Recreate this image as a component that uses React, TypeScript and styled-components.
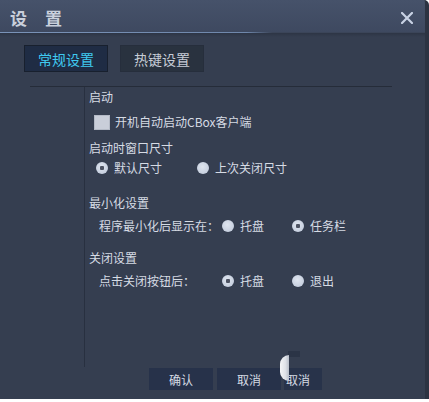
import React from "react";
import styled, { createGlobalStyle } from "styled-components";

const Global = createGlobalStyle`
  html, body { margin: 0; padding: 0; background: #ffffff; }
  body { font-family: "Noto Sans CJK SC", "Noto Sans", sans-serif; }
`;

const Window = styled.div`
  position: relative;
  width: 429px;
  height: 399px;
  box-sizing: border-box;
  background: #353e50;
  border-right: 4px solid #2c3342;
  border-top-right-radius: 5px;
  display: flex;
  flex-direction: column;
  overflow: hidden;
  color: #d6dbe4;
  font-size: 12px;
`;

const TitleBar = styled.div`
  height: 32px;
  display: flex;
  align-items: center;
  justify-content: space-between;
  padding: 0 12px 0 10px;
  background: linear-gradient(180deg, #46526a 0%, #3e4960 100%);
  flex-shrink: 0;
`;

const Title = styled.div`
  font-size: 17px;
  font-weight: 700;
  color: #c9d0dc;
  letter-spacing: 18px;
  margin-top: 3px;
`;

const Close = styled.div`
  width: 12px;
  height: 12px;
  display: flex;
  margin-top: 3px;
`;

const TitleGlow = styled.div`
  height: 1px;
  background: linear-gradient(90deg, #7a93b8 0%, #6f87ab 58%, #3b4559 64%);
  flex-shrink: 0;
`;

const ShadowBand = styled.div`
  height: 4px;
  background: linear-gradient(180deg, #2d3545 0%, #353e50 100%);
  flex-shrink: 0;
`;

const TabRow = styled.div`
  display: flex;
  gap: 12px;
  padding: 8px 0 14px 24px;
`;

const Tab = styled.div<{ $active?: boolean }>`
  width: 84px;
  height: 27px;
  box-sizing: border-box;
  display: flex;
  align-items: center;
  justify-content: center;
  font-size: 14px;
  color: ${(p) => (p.$active ? "#3fcaf0" : "#c6ccd6")};
  background: ${(p) => (p.$active ? "#1f2c44" : "#29323f")};
  border: 1px solid ${(p) => (p.$active ? "#18202e" : "#262e3c")};
`;

const Divider = styled.div`
  height: 1px;
  margin: 0 33px 0 30px;
  background: #252c39;
  flex-shrink: 0;
`;

const Body = styled.div`
  display: flex;
  height: 280px;
  flex-shrink: 0;
`;

const Gutter = styled.div`
  width: 84px;
  border-right: 1px solid #283040;
  flex-shrink: 0;
`;

const Content = styled.div`
  display: flex;
  flex-direction: column;
  padding-left: 4px;
`;

const Line = styled.div<{ $mt?: number; $indent?: number }>`
  height: 20px;
  line-height: 20px;
  display: flex;
  align-items: center;
  margin-top: ${(p) => p.$mt ?? 0}px;
  padding-left: ${(p) => p.$indent ?? 0}px;
  white-space: nowrap;
`;

const Label = styled.span<{ $w?: number }>`
  display: inline-block;
  width: ${(p) => (p.$w ? `${p.$w}px` : "auto")};
`;

const Box = styled.span`
  width: 16px;
  height: 15px;
  box-sizing: border-box;
  background: #c9ced9;
  border: 1px solid #b4bac6;
  margin-right: 5px;
  flex-shrink: 0;
`;

const Option = styled.span<{ $w: number }>`
  display: inline-flex;
  align-items: center;
  width: ${(p) => p.$w}px;
`;

const Dot = styled.span<{ $on?: boolean }>`
  position: relative;
  width: 12px;
  height: 12px;
  border-radius: 50%;
  background: radial-gradient(circle at 45% 40%, #dfe5ef 0%, #bcc6d8 100%);
  margin-right: 6px;
  flex-shrink: 0;
  &::after {
    content: "";
    display: ${(p) => (p.$on ? "block" : "none")};
    position: absolute;
    left: 4px;
    top: 4px;
    width: 4px;
    height: 4px;
    border-radius: 1px;
    background: #4c5262;
  }
`;

const Footer = styled.div`
  position: relative;
  display: flex;
  gap: 4px;
  padding: 1px 0 0 149px;
`;

const Button = styled.div<{ $w?: number; $left?: boolean }>`
  width: ${(p) => p.$w ?? 64}px;
  height: 22px;
  display: flex;
  align-items: center;
  justify-content: ${(p) => (p.$left ? "flex-start" : "center")};
  padding-left: ${(p) => (p.$left ? 2 : 0)}px;
  box-sizing: border-box;
  background: #27324a;
  color: #d6dbe4;
  font-size: 12px;
`;

const Ghost = styled(Button)`
  margin-left: -1px;
  background: #28334a;
`;

const Moon = styled.div`
  position: absolute;
  left: 280px;
  top: -12px;
  width: 9px;
  height: 26px;
  border-radius: 13px 0 0 13px;
  background: linear-gradient(90deg, #f4f5f7 0%, #dfe2e8 60%, #b9bfca 100%);
`;

const Chunk = styled.div`
  position: absolute;
  left: 288px;
  top: -16px;
  width: 12px;
  height: 6px;
  background: #2b3446;
`;

const EdgeMark = styled.div`
  position: absolute;
  right: -3px;
  bottom: 6px;
  width: 2px;
  height: 16px;
  background: #d9dce2;
`;

export default function App() {
  return (
    <>
      <Global />
      <Window>
        <TitleBar>
          <Title>设置</Title>
          <Close>
            <svg width="12" height="12" viewBox="0 0 12 12">
              <path d="M1 1 L11 11 M11 1 L1 11" stroke="#c8d2e4" strokeWidth="2.2" strokeLinecap="square" />
            </svg>
          </Close>
        </TitleBar>
        <TitleGlow />
        <ShadowBand />
        <TabRow>
          <Tab $active>常规设置</Tab>
          <Tab>热键设置</Tab>
        </TabRow>
        <Divider />
        <Body>
          <Gutter />
          <Content>
            <Line>启动</Line>
            <Line $mt={5} $indent={5}>
              <Box />
              开机自动启动CBox客户端
            </Line>
            <Line $mt={6}>启动时窗口尺寸</Line>
            <Line $indent={7}>
              <Option $w={101}>
                <Dot $on />
                默认尺寸
              </Option>
              <Option $w={100}>
                <Dot />
                上次关闭尺寸
              </Option>
            </Line>
            <Line $mt={15}>最小化设置</Line>
            <Line $mt={3} $indent={10}>
              <Label $w={123}>程序最小化后显示在：</Label>
              <Option $w={70}>
                <Dot />
                托盘
              </Option>
              <Option $w={70}>
                <Dot $on />
                任务栏
              </Option>
            </Line>
            <Line $mt={12}>关闭设置</Line>
            <Line $mt={3} $indent={10}>
              <Label $w={123}>点击关闭按钮后：</Label>
              <Option $w={70}>
                <Dot $on />
                托盘
              </Option>
              <Option $w={70}>
                <Dot />
                退出
              </Option>
            </Line>
          </Content>
        </Body>
        <Footer>
          <Button>确认</Button>
          <Button>取消</Button>
          <Ghost $w={38} $left>取消</Ghost>
          <Chunk />
          <Moon />
        </Footer>
        <EdgeMark />
      </Window>
    </>
  );
}
